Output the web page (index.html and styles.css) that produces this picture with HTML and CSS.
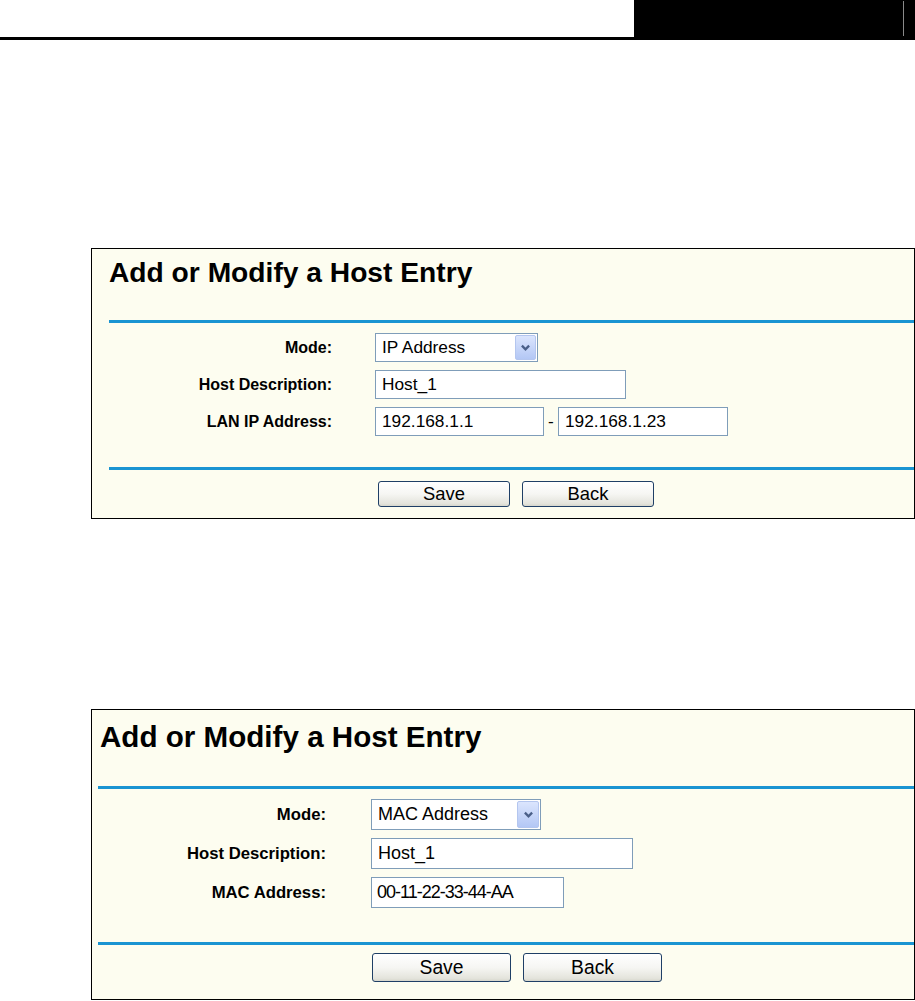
FILE: index.html
```html
<!DOCTYPE html>
<html lang="en">
<head>
<meta charset="utf-8">
<title>Add or Modify a Host Entry</title>
<link rel="stylesheet" href="styles.css">
</head>
<body>
<header class="doc-header">
  <div class="doc-tab"><span class="doc-tab-rule"></span></div>
</header>

<main class="doc-body">
  <section class="entry entry-ip">
    <h1 class="entry-title">Add or Modify a Host Entry</h1>
    <div class="entry-rule"></div>
    <div class="entry-form">
      <label class="field-label">Mode:</label>
      <div class="field">
        <div class="select select-ip"><span class="select-text">IP Address</span><span class="select-arrow"><svg viewBox="0 0 12 10" width="11" height="9"><path d="M2 3 L6 7 L10 3" fill="none" stroke="#4a5f88" stroke-width="2.6"/></svg></span></div>
      </div>
      <label class="field-label">Host Description:</label>
      <div class="field"><input class="text-input w-host" type="text" value="Host_1"></div>
      <label class="field-label">LAN IP Address:</label>
      <div class="field field-range">
        <input class="text-input w-ip1" type="text" value="192.168.1.1">
        <span class="range-dash">-</span>
        <input class="text-input w-ip2" type="text" value="192.168.1.23">
      </div>
    </div>
    <div class="entry-rule rule-bottom"></div>
    <div class="entry-actions">
      <button class="btn" type="button">Save</button>
      <button class="btn" type="button">Back</button>
    </div>
  </section>

  <section class="entry entry-mac">
    <h1 class="entry-title">Add or Modify a Host Entry</h1>
    <div class="entry-rule"></div>
    <div class="entry-form">
      <label class="field-label">Mode:</label>
      <div class="field">
        <div class="select select-mac"><span class="select-text">MAC Address</span><span class="select-arrow"><svg viewBox="0 0 12 10" width="11" height="9"><path d="M2 3 L6 7 L10 3" fill="none" stroke="#4a5f88" stroke-width="2.6"/></svg></span></div>
      </div>
      <label class="field-label">Host Description:</label>
      <div class="field"><input class="text-input w-host" type="text" value="Host_1"></div>
      <label class="field-label">MAC Address:</label>
      <div class="field"><input class="text-input w-mac" type="text" value="00-11-22-33-44-AA"></div>
    </div>
    <div class="entry-rule rule-bottom"></div>
    <div class="entry-actions">
      <button class="btn" type="button">Save</button>
      <button class="btn" type="button">Back</button>
    </div>
  </section>
</main>
</body>
</html>
```

FILE: styles.css
```css
html, body {
  margin: 0;
  padding: 0;
  background: #ffffff;
}

body {
  font-family: "Liberation Sans", Arial, sans-serif;
  color: #000;
}

/* ---------- document header ---------- */
.doc-header {
  display: flex;
  justify-content: flex-end;
  height: 37px;
  border-bottom: 3px solid #000;
}

.doc-tab {
  width: 281px;
  background: #000;
  display: flex;
  justify-content: flex-end;
  padding-right: 11px;
  box-sizing: border-box;
}

.doc-tab-rule {
  width: 1px;
  margin: 1px 0 1px;
  background: #8a8a8a;
}

/* ---------- page body ---------- */
.doc-body {
  padding-left: 91px;
  display: flex;
  flex-direction: column;
}

.entry {
  width: 824px;
  box-sizing: border-box;
  border: 1px solid #000;
  background: #fdfdf0;
}

.entry-title {
  margin: 0;
  font-weight: bold;
  white-space: nowrap;
}

.entry-rule {
  height: 3px;
  background: #1a94d2;
}

.entry-form {
  display: grid;
  align-items: center;
}

.field-label {
  text-align: right;
  font-weight: bold;
  white-space: nowrap;
}

.field {
  display: flex;
  align-items: center;
}

.text-input {
  box-sizing: border-box;
  border: 1px solid #7f9db9;
  background: #fff;
  font-family: "Liberation Sans", Arial, sans-serif;
  color: #000;
  padding: 0 6px;
  margin: 0;
  outline: none;
}

.range-dash {
  width: 14px;
  text-align: center;
}

.select {
  box-sizing: border-box;
  border: 1px solid #7f9db9;
  background: #fff;
  display: flex;
  align-items: stretch;
  justify-content: space-between;
}

.select-text {
  display: flex;
  align-items: center;
  padding-left: 6px;
  white-space: nowrap;
}

.select-arrow {
  margin: 1px;
  border: 1px solid #b4c6ef;
  border-radius: 2px;
  background: linear-gradient(#dbe5fd, #b3c7f5);
  display: flex;
  align-items: center;
  justify-content: center;
}

.entry-actions {
  display: flex;
  gap: 12px;
}

.btn {
  box-sizing: border-box;
  margin: 0;
  padding: 0;
  border: 1px solid #1f3f66;
  border-radius: 3px;
  background: linear-gradient(#ffffff 0%, #f6f6f3 50%, #e4e4dc 90%, #d6d6cc 100%);
  font-family: "Liberation Sans", Arial, sans-serif;
  color: #000;
}

/* ---------- first entry (IP mode) ---------- */
.entry-ip {
  margin-top: 208px;
  height: 271px;
}

.entry-ip .entry-title {
  font-size: 28.2px;
  line-height: 32px;
  padding: 7px 0 0 17px;
  margin-bottom: 32px;
}

.entry-ip .entry-rule {
  margin-left: 17px;
}

.entry-ip .entry-form {
  grid-template-columns: 240px auto;
  column-gap: 43px;
  row-gap: 8px;
  padding-top: 10px;
}

.entry-ip .field-label {
  font-size: 16px;
}

.entry-ip .text-input,
.entry-ip .select,
.entry-ip .range-dash {
  font-size: 17.3px;
}

.entry-ip .text-input,
.entry-ip .select {
  height: 29px;
}

.entry-ip .select-ip { width: 163px; }
.entry-ip .select-arrow { width: 19px; }
.entry-ip .w-host { width: 251px; }
.entry-ip .w-ip1 { width: 169px; }
.entry-ip .w-ip2 { width: 170px; }

.entry-ip .rule-bottom {
  margin-top: 31px;
}

.entry-ip .entry-actions {
  padding: 11px 0 0 286px;
}

.entry-ip .btn {
  width: 132px;
  height: 26px;
  font-size: 18.4px;
}

/* ---------- second entry (MAC mode) ---------- */
.entry-mac {
  margin-top: 190px;
  height: 291px;
}

.entry-mac .entry-title {
  font-size: 29.6px;
  line-height: 34px;
  padding: 10px 0 0 8px;
  margin-bottom: 32px;
}

.entry-mac .entry-rule {
  margin-left: 6px;
}

.entry-mac .entry-form {
  grid-template-columns: 234px auto;
  column-gap: 45px;
  row-gap: 8px;
  padding-top: 10px;
}

.entry-mac .field-label {
  font-size: 16.7px;
}

.entry-mac .text-input,
.entry-mac .select {
  font-size: 18px;
  height: 31px;
}

.entry-mac .select-mac { width: 170px; }
.entry-mac .select-arrow { width: 20px; }
.entry-mac .w-host { width: 262px; }
.entry-mac .w-mac {
  width: 193px;
  letter-spacing: -1px;
  padding-left: 5px;
}

.entry-mac .rule-bottom {
  margin-top: 34px;
}

.entry-mac .entry-actions {
  padding: 8px 0 0 280px;
}

.entry-mac .btn {
  width: 139px;
  height: 29px;
  font-size: 19.3px;
}
```
